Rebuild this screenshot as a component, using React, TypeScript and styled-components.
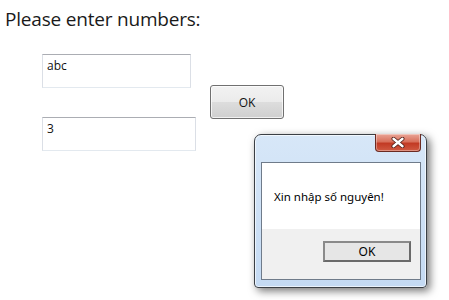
import React from "react";
import styled, { createGlobalStyle } from "styled-components";

const Global = createGlobalStyle`
  html, body { margin: 0; padding: 0; background: #ffffff; }
  body { width: 449px; height: 300px; overflow: hidden; font-family: "Open Sans", "Noto Sans", sans-serif; }
  #root { position: relative; width: 449px; height: 300px; }
`;

const Page = styled.div`
  position: relative;
  width: 449px;
  height: 300px;
  background: #ffffff;
`;

const Heading = styled.div`
  padding: 6px 0 0 5px;
  height: 30px;
  font-size: 19px;
  line-height: 26px;
  color: #1a1a1a;
  letter-spacing: -0.2px;
`;

const Form = styled.div`
  display: flex;
  align-items: flex-start;
  padding: 18px 0 0 42px;
`;

const Fields = styled.div`
  display: flex;
  flex-direction: column;
  gap: 29px;
`;

const TextBox = styled.div<{ $w: number }>`
  box-sizing: border-box;
  width: ${(p) => p.$w}px;
  height: 34px;
  border: 1px solid #dbdfe6;
  border-top-color: #abadb3;
  border-bottom-color: #e3e9ef;
  padding: 3px 0 0 4px;
  font-size: 12px;
  line-height: 16px;
  color: #111;
`;

const WinButton = styled.div`
  box-sizing: border-box;
  margin: 31px 0 0 14px;
  width: 74px;
  height: 34px;
  border: 1px solid #707070;
  border-radius: 3px;
  background: linear-gradient(#f2f2f2 0%, #ebebeb 50%, #dddddd 51%, #cfcfcf 100%);
  box-shadow: inset 0 0 0 1px rgba(255, 255, 255, 0.7);
  display: flex;
  align-items: center;
  justify-content: center;
  font-size: 12px;
  color: #111;
`;

const Dialog = styled.div`
  position: absolute;
  left: 254px;
  top: 134px;
  box-sizing: border-box;
  width: 173px;
  height: 154px;
  border: 1px solid #3a3f45;
  border-radius: 7px 7px 4px 4px;
  background: linear-gradient(#d7e7f8, #c4daf3);
  box-shadow: 3px 3px 9px rgba(0, 0, 0, 0.55), inset 0 0 0 1px rgba(255, 255, 255, 0.65);
  display: flex;
  flex-direction: column;
  padding: 0 5px 7px 6px;
`;

const TitleBar = styled.div`
  height: 27px;
  display: flex;
  justify-content: flex-end;
  align-items: flex-start;
`;

const CloseBtn = styled.div`
  box-sizing: border-box;
  width: 46px;
  height: 18px;
  margin-top: -1px;
  border: 1px solid #6b2a22;
  border-top: none;
  border-radius: 0 0 4px 4px;
  background: linear-gradient(#eaa597 0%, #d8705b 45%, #c23a24 55%, #d05a42 100%);
  box-shadow: inset 0 0 0 1px rgba(255, 255, 255, 0.35);
  display: flex;
  align-items: center;
  justify-content: center;
`;

const Client = styled.div`
  flex: 1;
  display: flex;
  flex-direction: column;
  border: 1px solid #6f7b8a;
  background: #f0f0f0;
`;

const Message = styled.div`
  height: 66px;
  background: #ffffff;
  display: flex;
  align-items: center;
  padding: 0 0 0 12px;
  font-family: "Noto Sans", "Open Sans", sans-serif;
  font-size: 11.5px;
  color: #000;
`;

const Footer = styled.div`
  flex: 1;
  display: flex;
  justify-content: flex-end;
  align-items: flex-start;
  padding: 12px 9px 0 0;
`;

const DefaultButton = styled.div`
  box-sizing: border-box;
  width: 88px;
  height: 21px;
  border: 2px solid #6a6a6a;
  border-left-color: #8a8a8a;
  border-top-color: #8a8a8a;
  background: #e6e6e6;
  display: flex;
  align-items: center;
  justify-content: center;
  font-family: "Noto Sans", "Open Sans", sans-serif;
  font-size: 12px;
  color: #000;
`;

export default function App() {
  return (
    <Page>
      <Global />
      <Heading>Please enter numbers:</Heading>
      <Form>
        <Fields>
          <TextBox $w={149}>abc</TextBox>
          <TextBox $w={154}>3</TextBox>
        </Fields>
        <WinButton>OK</WinButton>
      </Form>
      <Dialog>
        <TitleBar>
          <CloseBtn>
            <svg width="14" height="11" viewBox="0 0 14 11">
              <path d="M2.5 1.8 L11.5 9.2 M11.5 1.8 L2.5 9.2" stroke="#4a1a14" strokeWidth="4" strokeLinecap="round" />
              <path d="M2.5 1.8 L11.5 9.2 M11.5 1.8 L2.5 9.2" stroke="#ffffff" strokeWidth="2.4" strokeLinecap="round" />
            </svg>
          </CloseBtn>
        </TitleBar>
        <Client>
          <Message>Xin nhập số nguyên!</Message>
          <Footer>
            <DefaultButton>OK</DefaultButton>
          </Footer>
        </Client>
      </Dialog>
    </Page>
  );
}
